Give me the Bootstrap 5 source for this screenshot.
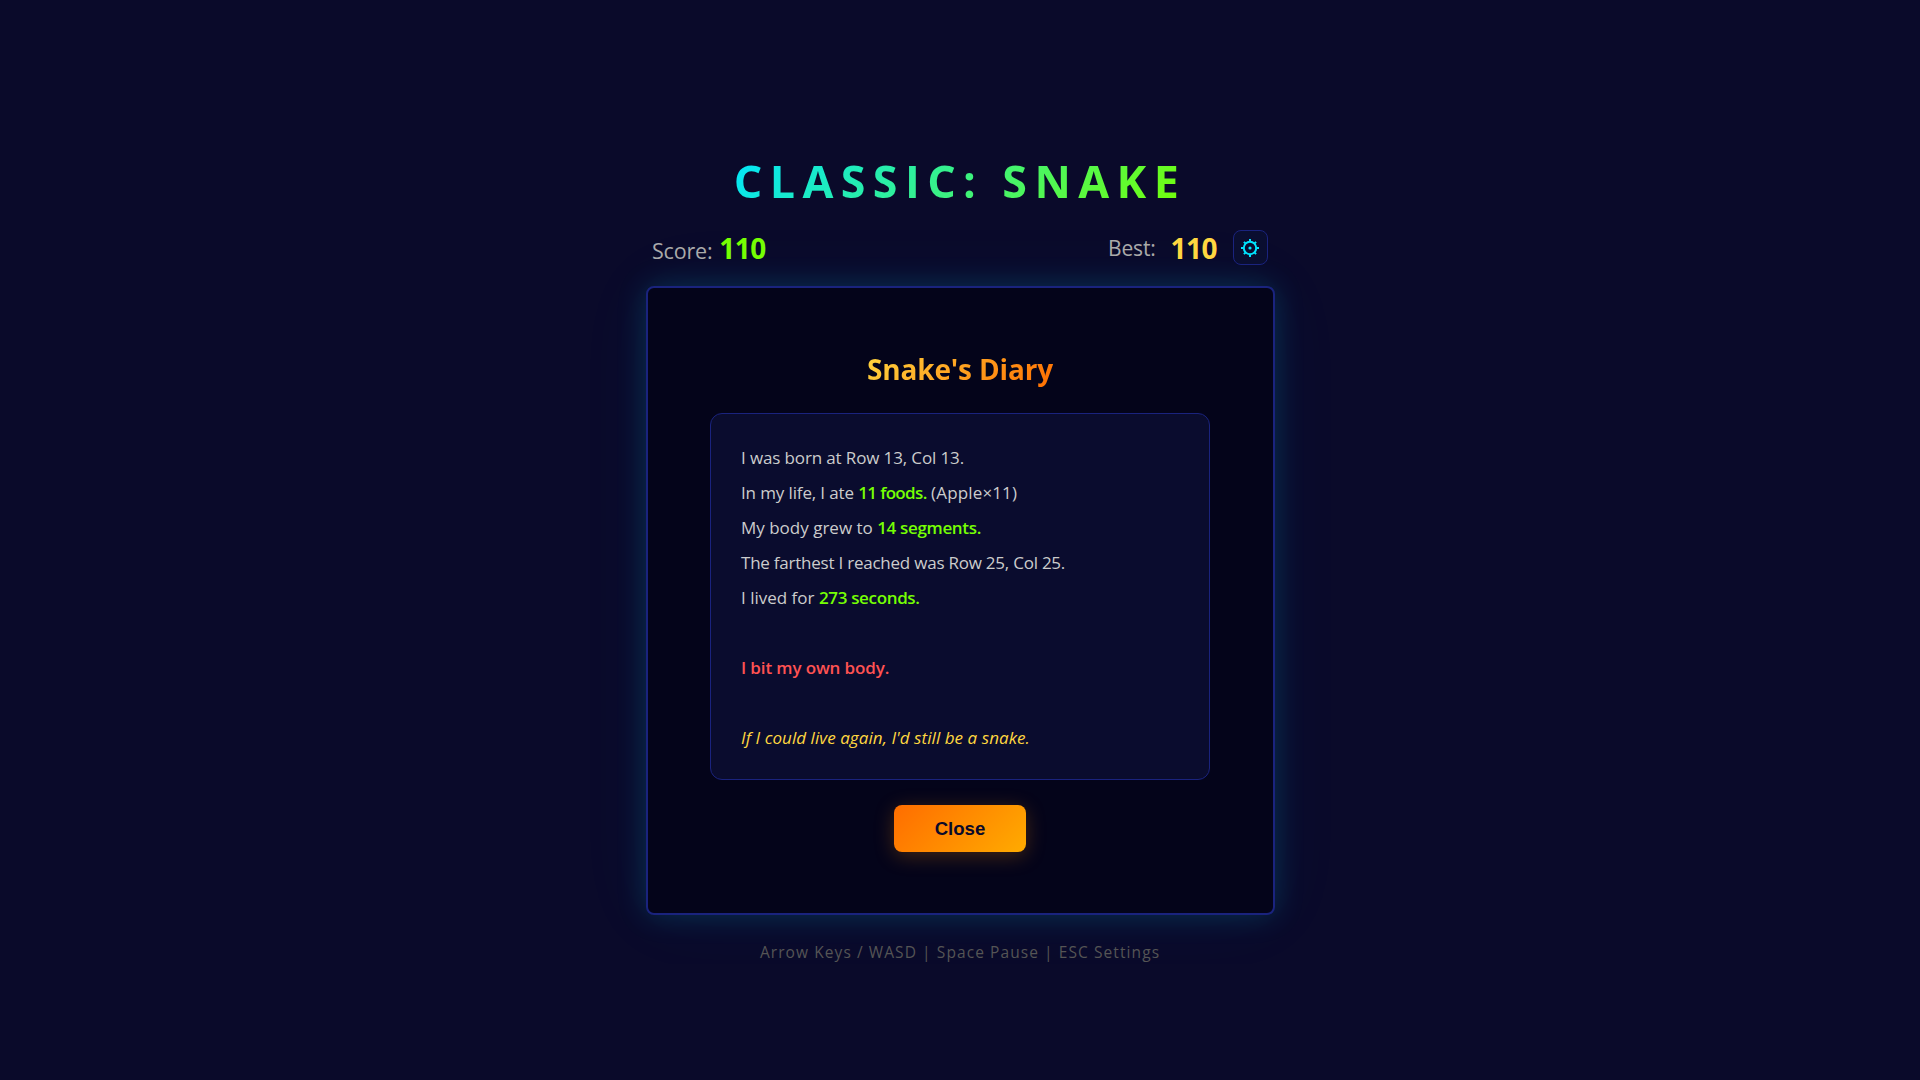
<!DOCTYPE html>
<html lang="en">
<head>
<meta charset="utf-8">
<meta name="viewport" content="width=device-width, initial-scale=1">
<title>Classic: Snake</title>
<link href="https://cdn.jsdelivr.net/npm/bootstrap@5.3.0/dist/css/bootstrap.min.css" rel="stylesheet">
<style>
  body { background: #0a0a2a; color: #aaa; font-family: "Open Sans", "Noto Sans", sans-serif; overflow: hidden; padding-top: 151px; }
  .game { width: 628px; }
  .game-title {
    font-size: 44.8px; font-weight: 700; line-height: 60px; letter-spacing: 7.4px; margin-bottom: 19px;
    background: linear-gradient(135deg, #00e5ff, #76ff03); -webkit-background-clip: text; background-clip: text; color: transparent;
  }
  .scorebar { height: 35px; padding: 0 6px; margin-bottom: 21px; line-height: 37px; position: relative; z-index: 1; }
  .score-label { font-size: 21.5px; letter-spacing: -.2px; }
  .best-label { font-size: 21px; letter-spacing: -.15px; padding-top: 2px; }
  .points { font-size: 28px; font-weight: 700; letter-spacing: -.55px; }
  .score-points { color: #76ff03; margin-left: 7px; }
  .best-points { color: #ffd740; margin-right: 1px; padding-top: 2px; }
  .best-group { gap: 15px; }
  .gear-btn { width: 35px; height: 35px; border: 1px solid #1a237e; border-radius: 8px; background: #0a0e30; color: #00e5ff; }
  .gear-btn svg { margin-right: 1px; }
  .board {
    width: 629px; height: 629px; border: 2px solid #1a237e; border-radius: 8px; background: #04041a; padding: 61px 1px 0 0;
    box-shadow: 0 0 30px rgba(0, 229, 255, .17), 0 0 80px rgba(0, 150, 255, .05);
  }
  .diary-title {
    font-size: 28px; font-weight: 700; line-height: 40px; letter-spacing: -.15px; margin-bottom: 24px;
    background: linear-gradient(135deg, #ffd740, #ff6d00); -webkit-background-clip: text; background-clip: text; color: transparent;
  }
  .diary { width: 500px; height: 367px; border: 1px solid #1a237e; border-radius: 12px; background: #0a0c2e; padding: 26px 29px 0 30px; color: #ccc; font-size: 17px; line-height: 35px; white-space: pre; }
  .diary div { height: 35px; }
  .diary strong { font-weight: 600; color: #76ff03; }
  .t-tight { letter-spacing: -.13px; }
  .t-tighter { letter-spacing: -.23px; }
  .t-strong { letter-spacing: -.34px; }
  .t-foods { letter-spacing: -.65px; }
  .t-wide { letter-spacing: .15px; }
  .death { color: #ff5252; font-weight: 600; }
  .wish { color: #ffd740; font-style: italic; letter-spacing: .06px; }
  .close-btn {
    width: 132px; height: 47px; margin-top: 25px; border: 0; border-radius: 8px; color: #0a0a2a;
    background: linear-gradient(135deg, #ff6d00, #ffab00); font: 700 18.6px/46px "Liberation Sans", sans-serif;
    box-shadow: 0 4px 20px rgba(255, 145, 0, .25);
  }
  .hints { color: #555; font-size: 15.5px; line-height: 24px; letter-spacing: 1.08px; margin-top: 25px; position: relative; z-index: 1; }
</style>
<script src="https://cdn.jsdelivr.net/npm/bootstrap@5.3.0/dist/js/bootstrap.bundle.min.js"></script>
</head>
<body>
<main class="game mx-auto d-flex flex-column align-items-center">
  <h1 class="game-title">CLASSIC: SNAKE</h1>
  <div class="scorebar w-100 d-flex justify-content-between">
    <div class="d-flex align-items-baseline"><span class="score-label">Score:</span><span class="points score-points">110</span></div>
    <div class="best-group d-flex align-items-center">
      <span class="best-label">Best:</span>
      <span class="points best-points">110</span>
      <button class="gear-btn p-0 d-flex align-items-center justify-content-center" type="button" aria-label="Settings">
        <svg width="20" height="20" viewBox="-10 -10 20 20" fill="none" stroke="currentColor">
          <circle r="6.2" stroke-width="2"/>
          <path stroke-width="2" d="M0-6.5V-9M0 6.5V9M-6.5 0H-9M6.5 0H9M4.6-4.6 6.1-6.1M4.6 4.6 6.1 6.1M-4.6 4.6-6.1 6.1M-4.6-4.6-6.1-6.1"/>
          <circle r="1.6" fill="currentColor" stroke="none"/>
        </svg>
      </button>
    </div>
  </div>
  <section class="board flex-shrink-0 align-self-start d-flex flex-column align-items-center">
    <h2 class="diary-title">Snake's Diary</h2>
    <div class="diary"><div class="t-tight">I was born at Row 13, Col 13.</div><div><span class="t-tight">In my life, I ate </span><strong class="t-foods">11 foods.</strong> <span class="t-wide">(Apple×11)</span></div><div>My body grew to <strong class="t-strong">14 segments.</strong></div><div class="t-tighter">The farthest I reached was Row 25, Col 25.</div><div>I lived for <strong class="t-strong">273 seconds.</strong></div><div></div><div class="death t-tight">I bit my own body.</div><div></div><div class="wish">If I could live again, I'd still be a snake.</div></div>
    <button class="close-btn p-0" type="button">Close</button>
  </section>
  <div class="hints">Arrow Keys / WASD | Space Pause | ESC Settings</div>
</main>
</body>
</html>
